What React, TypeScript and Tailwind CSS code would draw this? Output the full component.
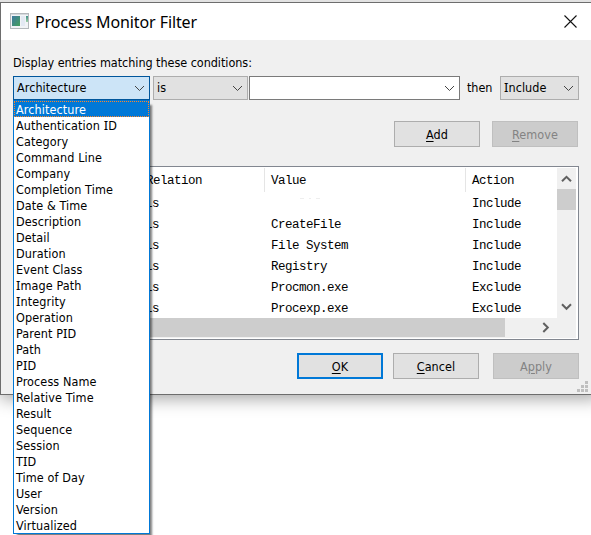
import React from "react";

const fields = [
  "Architecture", "Authentication ID", "Category", "Command Line", "Company",
  "Completion Time", "Date & Time", "Description", "Detail", "Duration",
  "Event Class", "Image Path", "Integrity", "Operation", "Parent PID", "Path",
  "PID", "Process Name", "Relative Time", "Result", "Sequence", "Session",
  "TID", "Time of Day", "User", "Version", "Virtualized",
];

const rules = [
  ["", "Include"],
  ["CreateFile", "Include"],
  ["File System", "Include"],
  ["Registry", "Include"],
  ["Procmon.exe", "Exclude"],
  ["Procexp.exe", "Exclude"],
];

function Label({ text }: { text: string }) {
  return (
    <span>
      {text.split(/(I)/).map((part, i) =>
        part === "I" ? (
          <span key={i} className="font-['Noto_Sans',sans-serif] text-[13px] leading-none">I</span>
        ) : (
          part
        )
      )}
    </span>
  );
}

function Chevron() {
  return (
    <svg width="11" height="7" viewBox="0 0 11 7" className="shrink-0" fill="none" stroke="#444" strokeWidth="1">
      <path d="M1 1l4.5 4.5L10 1" />
    </svg>
  );
}

function Combo({ label, className }: { label: string; className: string }) {
  return (
    <div className={`flex h-6 items-center justify-between border pr-[4px] pl-[3px] leading-[18px] tracking-[0.06px] ${className}`}>
      <Label text={label} />
      <Chevron />
    </div>
  );
}

function Button({ before = "", hot, after, className }: { before?: string; hot: string; after: string; className: string }) {
  return (
    <button className={`flex h-[26px] w-[86px] items-center justify-center pt-px leading-4 tracking-[0.06px] ${className}`}>
      <span>
        {before}
        <span className="underline decoration-1 underline-offset-2">{hot}</span>
        {after}
      </span>
    </button>
  );
}

export default function App() {
  return (
    <div className="relative h-[535px] w-[591px] overflow-hidden bg-white pt-[2px] font-['DejaVu_Sans_Condensed','DejaVu_Sans',sans-serif] text-[12.5px] tracking-[-0.04px] text-black [font-stretch:condensed]">
      <div className="absolute inset-x-0 top-0 z-10 h-[2px] bg-[#e2e2e2]" />
      <div className="relative h-[393px] w-[600px] border border-[#6d6d6d] bg-[#f0f0f0] shadow-[0_4px_16px_rgba(0,0,0,0.35)]">
        <header className="flex h-[37px] items-center bg-white pl-[9px]">
          <svg width="19" height="16" viewBox="0 0 19 16" shapeRendering="crispEdges" className="-mt-px">
            <defs>
              <linearGradient id="pane" x1="0" y1="0" x2="1" y2="1">
                <stop offset="0" stopColor="#3f78a0" />
                <stop offset="1" stopColor="#43a05c" />
              </linearGradient>
              <linearGradient id="side" x1="0" y1="0" x2="0" y2="1">
                <stop offset="0" stopColor="#3f8f86" />
                <stop offset="1" stopColor="#9fd0a8" />
              </linearGradient>
            </defs>
            <rect x=".5" y=".5" width="18" height="15" fill="#f1f3f6" stroke="#b4b8bc" />
            <path d="M1 1h17v1H1z" fill="#d5dade" />
            <path d="M2 3h8v10H2z" fill="url(#pane)" />
            <path d="M11 3h4v10h-4z" fill="#e3e9f3" />
            <path d="M16 3h2v6h-2z" fill="url(#side)" />
          </svg>
          <h1 className="ml-[6px] font-['Noto_Sans',sans-serif] text-[16px] leading-6 tracking-[-0.1px]">Process Monitor Filter</h1>
          <svg className="mr-[22px] ml-auto" width="13" height="13" viewBox="0 0 13 13" stroke="#111" strokeWidth="1.1">
            <path d="M.5.5l12 12M12.5.5l-12 12" />
          </svg>
        </header>

        <main className="w-[578px] pl-[12px]">
          <p className="h-[36px] pt-[14px] leading-[18px]">Display entries matching these conditions:</p>
          <div className="flex items-center">
            <Combo label="Architecture" className="w-[137px] border-[#00569c] bg-[#cce4f7]" />
            <Combo label="is" className="ml-[3px] w-[95px] border-[#adadad] bg-[#e1e1e1]" />
            <Combo label="" className="ml-px w-[211px] border-[#7a7a7a] bg-white" />
            <span className="w-[40px] pt-px pl-[7px]">then</span>
            <Combo label="Include" className="w-[79px] border-[#adadad] bg-[#e1e1e1]" />
          </div>
          <div className="mt-[21px] flex justify-end gap-[12px] pr-px">
            <Button hot="A" after="dd" className="border border-[#adadad] bg-[#e1e1e1]" />
            <Button hot="R" after="emove" className="border border-[#bfbfbf] bg-[#cccccc] text-[#838383]" />
          </div>

          <section className="mt-[19px] h-[174px] border border-[#828790] bg-white p-px">
            <div className="flex h-[151px]">
              <div className="flex-1 font-['Liberation_Mono',monospace] text-[12.5px] tracking-[-0.5px]">
                <div className="flex h-[24px] leading-[27px]">
                  <span className="w-[250px] border-r border-[#e5e5e5] pl-[131px]">Relation</span>
                  <span className="w-[201px] border-r border-[#e5e5e5] pl-[6px]">Value</span>
                  <span className="pl-[6px]">Action</span>
                </div>
                {rules.map(([value, action], i) => (
                  <div key={i} className="flex h-[21px] leading-[25px]">
                    <span className="w-[250px] pl-[130px]">is</span>
                    <span className="w-[201px] pl-[6px]">
                      {value || (
                        <span className="ml-[29px] flex gap-[5px] pt-[6px]">
                          <i className="h-px w-[4px] bg-[#eeeeee]" />
                          <i className="h-px w-[2px] bg-[#eeeeee]" />
                          <i className="h-px w-[4px] bg-[#eeeeee]" />
                        </span>
                      )}
                    </span>
                    <span className="pl-[6px]">{action}</span>
                  </div>
                ))}
              </div>
              <div className="mr-px flex h-[150px] w-[19px] flex-col items-center bg-[#f0f0f0]">
                <svg className="mt-[7px]" width="11" height="8" viewBox="0 0 11 8" fill="none" stroke="#606060" strokeWidth="2">
                  <path d="M1 6.3l4.5-4.5L10 6.3" />
                </svg>
                <div className="mt-[6px] h-[21px] w-full bg-[#cdcdcd]" />
                <svg className="mt-auto mb-[7px]" width="11" height="8" viewBox="0 0 11 8" fill="none" stroke="#606060" strokeWidth="2">
                  <path d="M1 1.3l4.5 4.5L10 1.3" />
                </svg>
              </div>
            </div>
            <div className="-mt-px mr-px flex h-[20px] items-center bg-[#f0f0f0]">
              <div className="h-[19px] w-[490px] self-start bg-[#cdcdcd]" />
              <svg className="-mt-px ml-[37px]" width="8" height="11" viewBox="0 0 8 11" fill="none" stroke="#606060" strokeWidth="2">
                <path d="M1.3 1l4.5 4.5L1.3 10" />
              </svg>
            </div>
          </section>

          <div className="mt-[13px] flex justify-end">
            <Button hot="O" after="K" className="border-2 border-[#0078d7] bg-[#e1e1e1]" />
            <Button hot="C" after="ancel" className="ml-[10px] border border-[#adadad] bg-[#e1e1e1]" />
            <Button before="A" hot="p" after="ply" className="ml-[14px] border border-[#bfbfbf] bg-[#cccccc] text-[#838383]" />
          </div>
        </main>
        <svg className="absolute top-[378px] left-[576px]" width="11" height="11" viewBox="0 0 11 11" fill="#bfbfbf">
          <path d="M8 0h3v3H8zM4 4h3v3H4zM8 4h3v3H8zM0 8h3v3H0zM4 8h3v3H4zM8 8h3v3H8z" />
        </svg>
      </div>

      <ul className="absolute top-[100px] left-[13px] w-[137px] border border-[#0078d7] bg-white tracking-[0.1px] shadow-[3px_4px_2px_-1px_rgba(0,0,0,0.5)]">
        {fields.map((field, i) => (
          <li
            key={field}
            className={
              i === 0
                ? "h-4 border border-dotted border-[#ff8728] bg-[#0078d7] pl-[1px] leading-[16px] text-white"
                : "h-4 pl-[2px] leading-[18px]"
            }
          >
            <Label text={field} />
          </li>
        ))}
      </ul>
    </div>
  );
}
